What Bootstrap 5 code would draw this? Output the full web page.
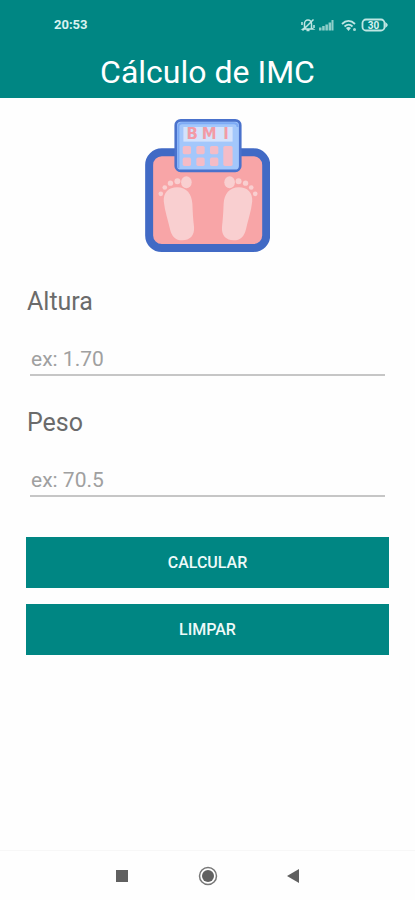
<!DOCTYPE html>
<html lang="pt-BR">
<head>
<meta charset="utf-8">
<meta name="viewport" content="width=device-width, initial-scale=1">
<title>Cálculo de IMC</title>
<link href="https://cdn.jsdelivr.net/npm/bootstrap@5.3.0/dist/css/bootstrap.min.css" rel="stylesheet">
<style>
  body { font-family: Roboto, "Liberation Sans", sans-serif; background: #fefefe; }
  .app-header { background: #008683; }
  .status-bar { height: 50px; padding: 0 26px 0 54px; color: #d9f2f0; }
  .clock { font-size: 13px; font-weight: 700; }
  .app-title { font-size: 32px; line-height: 44px; padding-bottom: 4px; }
  .app-main { padding: 21px 26px 0; }
  .bmi-form { padding-top: 34px; }
  .field-label { font-size: 25px; line-height: 32px; color: #6b6b6b; margin-left: 1px; }
  .field-input { font-size: 21px; line-height: 32px; height: 36px; margin-top: 22px; padding: 4px 1px 0; border: 0; border-bottom: 2px solid #c6c6c6; border-radius: 0; background: transparent; }
  .field-input::placeholder { color: #a0a0a0; }
  .field-input:focus { background: transparent; border-color: #008683; box-shadow: none; }
  .field-wrap { padding: 0 4px; }
  .field-group { margin-bottom: 31px; }
  .btn-teal { --bs-btn-color: #eefaf9; --bs-btn-bg: #008683; --bs-btn-hover-color: #fff; --bs-btn-hover-bg: #00716f; --bs-btn-active-bg: #00605e; --bs-btn-active-color: #fff; height: 51px; font-size: 16px; font-weight: 500; }
  .actions { padding-top: 9px; }
  .nav-keys { height: 50px; gap: 60px; border-top: 1px solid #f7f7f7; }
  .nav-key { width: 26px; height: 26px; }
</style>
</head>
<body class="d-flex flex-column min-vh-100">
<header class="app-header">
  <div class="status-bar d-flex align-items-center justify-content-between">
    <span class="clock">20:53</span>
    <svg width="90" height="18" viewBox="0 0 90 18" fill="none" stroke="#bfe6e3" stroke-width="1.5" aria-hidden="true">
      <path d="M5.500 12V7.500a3.500 3.500 0 0 1 7 0V12l1.500 1H4zM7.500 14.500h3M3.500 14.500 14.500 3.500M3 6v3M15 9v3"/>
      <path d="M20 14.500h2.500v-3H20zM23.200 14.500h2.500V10h-2.500zM26.400 14.500h2.500V8.500h-2.500zM29.600 14.500h2.500V6.500h-2.500zM32.500 14.500h2V4h-2z" fill="#8fcfca" stroke="none"/>
      <path d="M43 8c4-4 9-4 13 0M45.500 10.500c3-2.500 5.500-2.500 8 0" stroke-width="1.800"/>
      <path d="M47 12q2.500-2 5 0L49.500 15z" fill="#bfe6e3" stroke="none"/><circle cx="55.500" cy="13.500" r="1.500" fill="#a5dad6" stroke="none"/>
      <rect x="63.500" y="3.500" width="22" height="11" rx="3.500" stroke-width="1.800"/>
      <path d="M87 7.500q2 1.500 0 3z" fill="#bfe6e3"/>
      <text x="74.500" y="12.500" text-anchor="middle" font-family="Roboto, sans-serif" font-size="10" font-weight="700" fill="#d9f2f0" stroke="none">30</text>
    </svg>
  </div>
  <h1 class="app-title text-center text-white fw-normal m-0">Cálculo de IMC</h1>
</header>

<main class="app-main flex-grow-1">
  <svg class="d-block mx-auto" width="125" height="133" viewBox="30 26 375 400" role="img" aria-label="BMI">
    <rect x="42" y="126" width="352" height="288" rx="38" fill="#f8a5a7" stroke="#416ac5" stroke-width="24"/>
    <g fill="#f9cfd0">
      <path id="sole" d="M86 274c-2-28 15-43 40-43 29 0 44 20 46 50 1 26 2 44 5 70 2 26-13 40-35 40-21 0-32-13-37-33-6-27-16-54-19-84z"/>
      <ellipse cx="154" cy="216" rx="16" ry="18"/><circle cx="127" cy="213" r="9"/><circle cx="106" cy="219" r="8"/><circle cx="89" cy="232" r="7"/><circle cx="77" cy="251" r="7"/>
      <path d="M352 274c2-28-15-43-40-43-29 0-44 20-46 50-1 26-2 44-5 70-2 26 13 40 35 40 21 0 32-13 37-33 6-27 16-54 19-84z"/>
      <ellipse cx="284" cy="216" rx="16" ry="18"/><circle cx="311" cy="213" r="9"/><circle cx="332" cy="219" r="8"/><circle cx="349" cy="232" r="7"/><circle cx="361" cy="251" r="7"/>
    </g>
    <rect x="122" y="30" width="194" height="152" rx="15" fill="#a3c7fb" stroke="#4a72cc" stroke-width="8"/>
    <path d="M130 174V50q0-11 11-11h156q11 0 11 11" fill="none" stroke="#7daaf5" stroke-width="6"/>
    <rect x="145" y="50" width="148" height="44" fill="#d4e2fb"/>
    <text x="154 200 265" y="87" font-family="'DejaVu Sans', sans-serif" font-size="45" font-weight="700" fill="#f29ba6">BMI</text>
    <g fill="#f4bcc7">
      <rect x="143" y="107" width="25" height="25" rx="5"/><rect x="184" y="107" width="25" height="25" rx="5"/><rect x="225" y="107" width="25" height="25" rx="5"/>
      <rect x="143" y="142" width="25" height="25" rx="5"/><rect x="184" y="142" width="25" height="25" rx="5"/><rect x="225" y="142" width="25" height="25" rx="5"/>
      <rect x="265" y="107" width="28" height="60" rx="5"/>
    </g>
  </svg>

  <form class="bmi-form">
    <div class="field-group">
      <label class="field-label d-block" for="altura">Altura</label>
      <div class="field-wrap"><input class="field-input form-control" id="altura" type="text" inputmode="decimal" placeholder="ex: 1.70"></div>
    </div>
    <div class="field-group">
      <label class="field-label d-block" for="peso">Peso</label>
      <div class="field-wrap"><input class="field-input form-control" id="peso" type="text" inputmode="decimal" placeholder="ex: 70.5"></div>
    </div>
    <div class="actions d-grid gap-3">
      <button class="btn btn-teal border-0 rounded-0" type="button">CALCULAR</button>
      <button class="btn btn-teal border-0 rounded-0" type="reset">LIMPAR</button>
    </div>
  </form>
</main>

<footer class="nav-keys d-flex justify-content-center align-items-center">
  <button class="nav-key btn border-0 p-0 d-flex" type="button" aria-label="Recentes"><svg width="26" height="26" viewBox="0 0 26 26"><rect x="7" y="7" width="12" height="12" fill="#606060"/></svg></button>
  <button class="nav-key btn border-0 p-0 d-flex" type="button" aria-label="Início"><svg width="26" height="26" viewBox="0 0 26 26"><circle cx="13" cy="13" r="8.500" fill="none" stroke="#777" stroke-width="1.500"/><circle cx="13" cy="13" r="6" fill="#606060"/></svg></button>
  <button class="nav-key btn border-0 p-0 d-flex" type="button" aria-label="Voltar"><svg width="26" height="26" viewBox="0 0 26 26"><path d="M6 13 18 6v14z" fill="#606060"/></svg></button>
</footer>
<script src="https://cdn.jsdelivr.net/npm/bootstrap@5.3.0/dist/js/bootstrap.bundle.min.js"></script>
</body>
</html>
